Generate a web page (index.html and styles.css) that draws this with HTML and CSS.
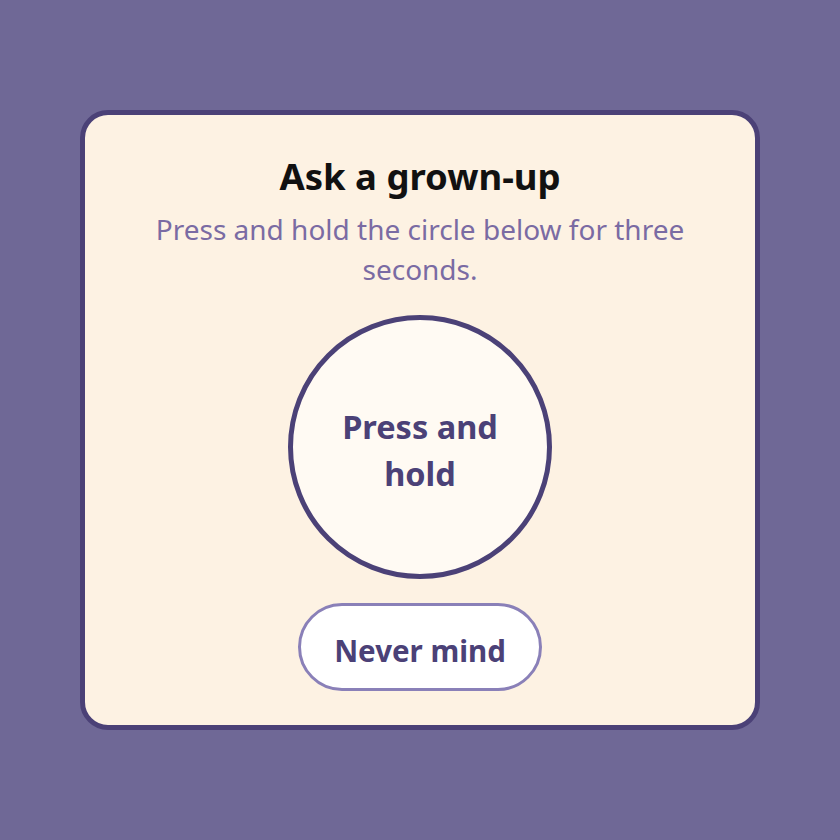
FILE: index.html
```html
<!DOCTYPE html>
<html lang="en">
<head>
<meta charset="utf-8">
<title>Ask a grown-up</title>
<link rel="stylesheet" href="styles.css">
</head>
<body>
<div class="card">
  <h1 class="title">Ask a grown-up</h1>
  <p class="subtitle">Press and hold the circle below for three seconds.</p>
  <button class="hold">Press and hold</button>
  <button class="cancel">Never mind</button>
</div>
</body>
</html>
```
FILE: styles.css
```css
html, body {
  margin: 0;
  padding: 0;
}
body {
  width: 840px;
  height: 840px;
  background: #6f6896;
  display: flex;
  align-items: center;
  justify-content: center;
  font-family: "Noto Sans", sans-serif;
}
.card {
  box-sizing: border-box;
  width: 680px;
  height: 620px;
  background: #fdf2e3;
  border: 5px solid #4b4177;
  border-radius: 28px;
  padding: 40px 40px 0;
  display: flex;
  flex-direction: column;
  align-items: center;
}
.title {
  margin: 0;
  font-size: 36.5px;
  line-height: 42px;
  font-weight: 700;
  color: #111111;
}
.subtitle {
  margin: 12px 0 0;
  max-width: 580px;
  font-size: 28px;
  line-height: 40px;
  color: #7a6ba3;
  text-align: center;
}
.hold {
  margin-top: 26px;
  box-sizing: border-box;
  width: 264px;
  height: 264px;
  border-radius: 50%;
  border: 5px solid #4b4177;
  background: #fffaf3;
  color: #4b4177;
  font-family: inherit;
  font-size: 32.5px;
  line-height: 47px;
  font-weight: 700;
  padding: 6px 40px 0;
}
.cancel {
  margin-top: 24px;
  box-sizing: border-box;
  width: 244px;
  height: 88px;
  border-radius: 44px;
  border: 3px solid #8a80b8;
  background: #ffffff;
  color: #4b4177;
  font-family: inherit;
  font-size: 29.5px;
  font-weight: 700;
  padding: 6px 0 0;
}
```
